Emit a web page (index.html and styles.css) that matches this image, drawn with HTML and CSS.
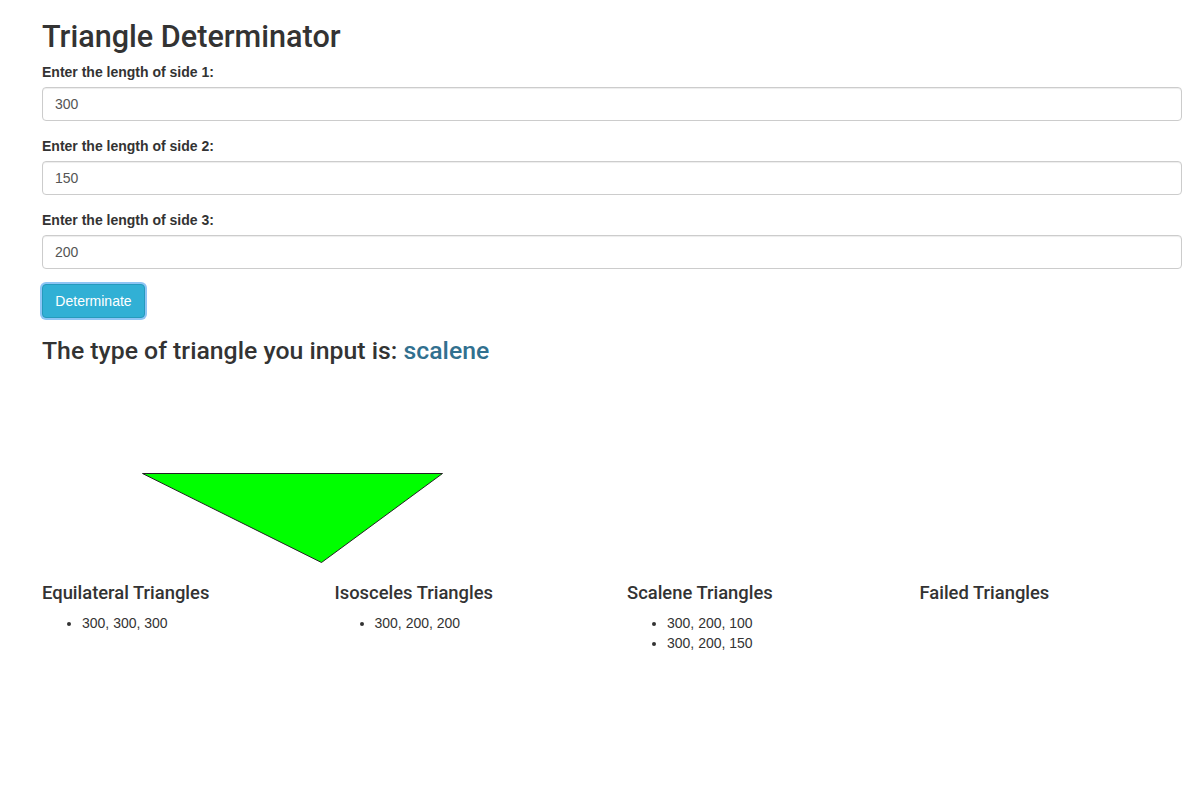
FILE: index.html
```html
<!DOCTYPE html>
<html>
<head>
<meta charset="utf-8">
<title>Triangle Determinator</title>
<link rel="stylesheet" href="styles.css">
</head>
<body>
<div class="page">
  <h2 class="title">Triangle Determinator</h2>
  <form class="form">
    <div class="form-group">
      <label class="label">Enter the length of side 1:</label>
      <input class="form-control" type="text" value="300">
    </div>
    <div class="form-group">
      <label class="label">Enter the length of side 2:</label>
      <input class="form-control" type="text" value="150">
    </div>
    <div class="form-group">
      <label class="label">Enter the length of side 3:</label>
      <input class="form-control" type="text" value="200">
    </div>
    <button type="button" class="btn">Determinate</button>
  </form>
  <h3 class="result">The type of triangle you input is: <span class="type">scalene</span></h3>
  <svg class="canvas" width="1140" height="199" viewBox="0 0 1140 199">
    <polygon points="100.5,99.5 400.5,99.5 279.5,188.5" fill="#00ff00" stroke="#222" stroke-width="1"/>
  </svg>
  <div class="columns">
    <div class="col">
      <h4 class="col-title">Equilateral Triangles</h4>
      <ul class="list"><li>300, 300, 300</li></ul>
    </div>
    <div class="col">
      <h4 class="col-title">Isosceles Triangles</h4>
      <ul class="list"><li>300, 200, 200</li></ul>
    </div>
    <div class="col">
      <h4 class="col-title">Scalene Triangles</h4>
      <ul class="list"><li>300, 200, 100</li><li>300, 200, 150</li></ul>
    </div>
    <div class="col">
      <h4 class="col-title">Failed Triangles</h4>
      <ul class="list"></ul>
    </div>
  </div>
</div>
</body>
</html>
```
FILE: styles.css
```css
* { box-sizing: border-box; }
html, body { margin: 0; padding: 0; background: #fff; }
body {
  font-family: "Liberation Sans", Arial, sans-serif;
  font-size: 14px;
  line-height: 20px;
  color: #333;
}
.page { padding: 0 16px 0 42px; }
.title, .result, .col-title {
  font-family: Roboto, "Liberation Sans", Arial, sans-serif;
  font-weight: 500;
}
.title {
  font-size: 30.6px;
  line-height: 33px;
  margin: 20px 0 9px;
}
.form-group { margin-bottom: 15px; }
.label {
  display: block;
  font-weight: bold;
  font-size: 14px;
  margin-bottom: 5px;
  line-height: 20px;
}
.form-control {
  display: block;
  width: 100%;
  height: 34px;
  padding: 6px 12px;
  font-family: inherit;
  font-size: 14px;
  color: #555;
  background: #fff;
  border: 1px solid #ccc;
  border-radius: 4px;
  box-shadow: inset 0 1px 1px rgba(0,0,0,.075);
  outline: none;
}
.btn {
  display: block;
  height: 34px;
  width: 103px;
  padding: 6px 12px;
  font-family: inherit;
  font-size: 14px;
  color: #fff;
  background: #31b0d5;
  border: 1px solid #269abc;
  border-radius: 4px;
  box-shadow: 0 0 0 2px #8ec5f5;
  cursor: pointer;
}
.result {
  font-size: 24.8px;
  line-height: 26px;
  margin: 20px 0 10px;
}
.type { color: #31708f; }
.canvas { display: block; }
.columns {
  display: grid;
  grid-template-columns: repeat(4, 1fr);
  column-gap: 30px;
}
.col-title {
  font-size: 18.4px;
  line-height: 20px;
  margin: 10px 0 10px;
}
.list {
  margin: 0 0 10px;
  padding-left: 40px;
  font-size: 14px;
  line-height: 20px;
}
```
